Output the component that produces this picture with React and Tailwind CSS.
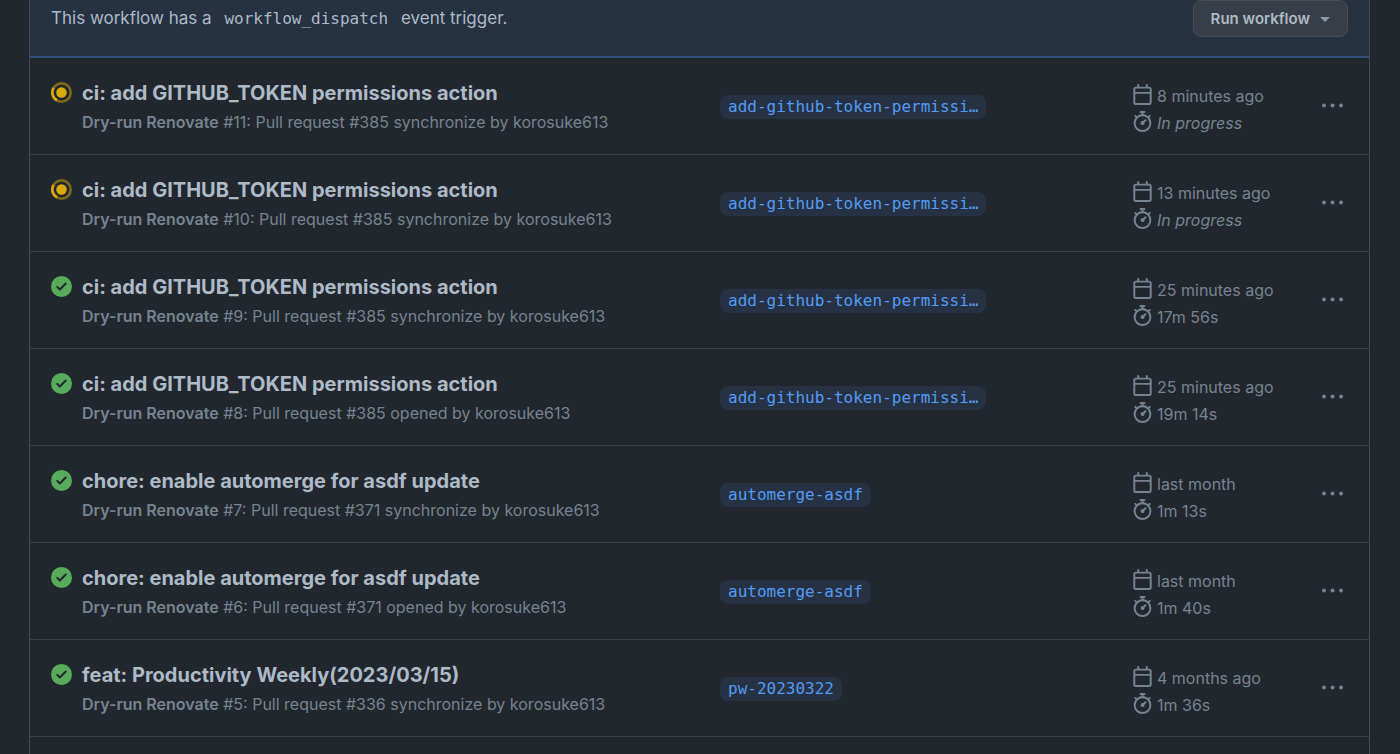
import React from 'react'

const runs = [
  { id: 11, status: 'progress', title: 'ci: add GITHUB_TOKEN permissions action', event: 'Pull request #385 synchronize by korosuke613', branch: 'add-github-token-permissi…', when: '8 minutes ago', duration: 'In progress' },
  { id: 10, status: 'progress', title: 'ci: add GITHUB_TOKEN permissions action', event: 'Pull request #385 synchronize by korosuke613', branch: 'add-github-token-permissi…', when: '13 minutes ago', duration: 'In progress' },
  { id: 9, status: 'success', title: 'ci: add GITHUB_TOKEN permissions action', event: 'Pull request #385 synchronize by korosuke613', branch: 'add-github-token-permissi…', when: '25 minutes ago', duration: '17m 56s' },
  { id: 8, status: 'success', title: 'ci: add GITHUB_TOKEN permissions action', event: 'Pull request #385 opened by korosuke613', branch: 'add-github-token-permissi…', when: '25 minutes ago', duration: '19m 14s' },
  { id: 7, status: 'success', title: 'chore: enable automerge for asdf update', event: 'Pull request #371 synchronize by korosuke613', branch: 'automerge-asdf', when: 'last month', duration: '1m 13s' },
  { id: 6, status: 'success', title: 'chore: enable automerge for asdf update', event: 'Pull request #371 opened by korosuke613', branch: 'automerge-asdf', when: 'last month', duration: '1m 40s' },
  { id: 5, status: 'success', title: 'feat: Productivity Weekly(2023/03/15)', event: 'Pull request #336 synchronize by korosuke613', branch: 'pw-20230322', when: '4 months ago', duration: '1m 36s' },
]

const CalendarIcon = () => (
  <svg viewBox="0 0 16 16" className="w-[21px] h-[21px] shrink-0" fill="currentColor" aria-hidden="true">
    <path d="M4.75 0a.75.75 0 0 1 .75.75V2h5V.75a.75.75 0 0 1 1.5 0V2h1.25c.966 0 1.75.784 1.75 1.75v10.5A1.75 1.75 0 0 1 13.25 16H2.75A1.75 1.75 0 0 1 1 14.25V3.75C1 2.784 1.784 2 2.75 2H4V.75A.75.75 0 0 1 4.75 0ZM2.5 7.5v6.75c0 .138.112.25.25.25h10.5a.25.25 0 0 0 .25-.25V7.5Zm10.75-4H2.75a.25.25 0 0 0-.25.25V6h11V3.75a.25.25 0 0 0-.25-.25Z" />
  </svg>
)

const StopwatchIcon = () => (
  <svg viewBox="0 0 16 16" className="w-[21px] h-[21px] shrink-0" fill="currentColor" aria-hidden="true">
    <path d="M5.75.75A.75.75 0 0 1 6.5 0h3a.75.75 0 0 1 0 1.5h-.75v1l-.001.041a6.724 6.724 0 0 1 3.464 1.435l.007-.006.75-.75a.749.749 0 0 1 1.275.326.749.749 0 0 1-.215.734l-.75.75-.006.007a6.75 6.75 0 1 1-10.548 0L2.72 5.03l-.75-.75a.751.751 0 0 1 .018-1.042.751.751 0 0 1 1.042-.018l.75.75.007.006A6.72 6.72 0 0 1 7.25 2.541V1.5H6.5a.75.75 0 0 1-.75-.75ZM8 14.5a5.25 5.25 0 1 0-.001-10.501A5.25 5.25 0 0 0 8 14.5Zm.389-6.7 1.33-1.33a.75.75 0 1 1 1.061 1.06L9.45 8.861A1.503 1.503 0 0 1 8 10.75a1.499 1.499 0 1 1 .389-2.95Z" />
  </svg>
)

const StatusIcon = ({ status }) => {
  if (status === 'progress') {
    return (
      <svg viewBox="0 0 16 16" className="w-[21px] h-[21px] shrink-0 text-[#daaa0a]" fill="none" role="img" aria-label="currently running">
        <circle cx="8" cy="8" r="7" stroke="currentColor" strokeWidth="2" strokeOpacity="0.5" />
        <circle cx="8" cy="8" r="4" fill="currentColor" />
        <path d="M1.94 4.5A7 7 0 0 0 4.5 14.06" stroke="currentColor" strokeWidth="2" />
      </svg>
    )
  }
  return (
    <svg viewBox="0 0 16 16" className="w-[21px] h-[21px] shrink-0 text-[#57ab5a]" fill="currentColor" role="img" aria-label="completed successfully">
      <path d="M8 16A8 8 0 1 1 8 0a8 8 0 0 1 0 16Zm3.78-9.72a.751.751 0 0 0-.018-1.042.751.751 0 0 0-1.042-.018L6.75 9.19 5.28 7.72a.751.751 0 0 0-1.042.018.751.751 0 0 0-.018 1.042l2 2a.75.75 0 0 0 1.06 0Z" />
    </svg>
  )
}

const RunRow = ({ run }) => (
  <li className="flex h-[97px] border-b border-[#373e47] pl-[21px] pr-[18px]">
    <div className="flex flex-1 min-w-0 gap-[10px] pt-[24px]">
      <StatusIcon status={run.status} />
      <div className="min-w-0 -mt-[3px]">
        <a href="#" className="block truncate text-[20px] leading-[28px] font-bold text-[#adbac7]">{run.title}</a>
        <p className="mt-1 truncate text-[16px] leading-[22px]">
          <span className="font-semibold">Dry-run Renovate</span> #{run.id}: {run.event}
        </p>
      </div>
    </div>

    <div className="w-[412px] shrink-0 pt-[36px]">
      <a href="#" className="inline-block h-[24px] rounded-lg bg-[#263243] px-2 font-['DejaVu_Sans_Mono',monospace] text-[16px] leading-[23px] text-[#539bf5]">{run.branch}</a>
    </div>

    <div className="w-[181px] shrink-0 pt-[26px] text-[16px] leading-[24px]">
      <div className="flex h-[27px] gap-1">
        <CalendarIcon />
        <span>{run.when}</span>
      </div>
      <div className="flex h-[27px] gap-1">
        <StopwatchIcon />
        <span className={run.duration === 'In progress' ? 'italic' : ''}>{run.duration}</span>
      </div>
    </div>

    <div className="w-[38px] shrink-0 pt-[32px]">
      <button type="button" aria-label="Show options" className="flex w-full justify-center p-[5px]">
        <svg viewBox="0 0 16 16" className="w-[21px] h-[21px]" fill="currentColor" aria-hidden="true" overflow="visible">
          <circle cx="1.5" cy="8" r="1.5" />
          <circle cx="8" cy="8" r="1.5" />
          <circle cx="14.5" cy="8" r="1.5" />
        </svg>
      </button>
    </div>
  </li>
)

const App = () => {
  return (
    <div className="h-screen overflow-hidden bg-[#22272e] pl-[29px] pr-[30px] font-['Inter',sans-serif] text-[#768390]">
      <main className="min-h-[800px] border-x border-[#444c56]">
        <header className="flex h-[58px] items-start justify-between border-b-2 border-[#2f4f7e] bg-[#263142] px-[21px] text-[#adbac7]">
          <p className="text-[17px] leading-[36px]">
            This workflow has a <code className="px-2 font-['DejaVu_Sans_Mono',monospace] text-[16px]">workflow_dispatch</code> event trigger.
          </p>
          <button type="button" className="flex h-[37px] items-center gap-[10px] rounded-lg border border-[#444c56] bg-[#373e47] px-[17px] text-[15px] leading-[24px] font-semibold">
            Run workflow
            <span className="mt-[2px] border-x-[5px] border-t-[5px] border-x-transparent border-t-[#8e99a5]"></span>
          </button>
        </header>

        <ul>
          {runs.map((run) => (
            <RunRow key={run.id} run={run} />
          ))}
        </ul>
      </main>
    </div>
  )
}

export default App
